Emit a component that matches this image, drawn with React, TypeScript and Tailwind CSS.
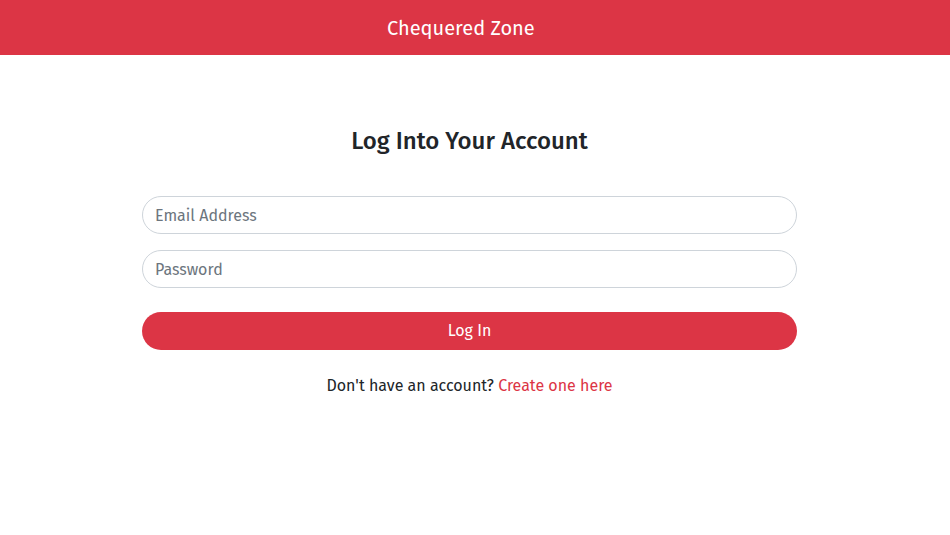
export default function App() {
  const font = { fontFamily: '"Fira Sans", "Open Sans", "Noto Sans", sans-serif' };
  return (
    <div className="min-h-[535px] bg-white text-[#212529]" style={font}>
      <header className="h-[55px] bg-[#dc3545] flex items-center">
        <div className="ml-[387px] text-[20px] text-white leading-none">Chequered Zone</div>
      </header>
      <main className="ml-[142px] w-[655px] flex flex-col">
        <h1 className="mt-[71px] text-center text-[24px] font-medium leading-[30px]">Log Into Your Account</h1>
        <form className="mt-[40px] flex flex-col">
          <input
            type="email"
            placeholder="Email Address"
            className="h-[38px] rounded-full border border-[#ced4da] px-3 text-[16px] placeholder:text-[#6c757d] outline-none"
          />
          <input
            type="password"
            placeholder="Password"
            className="mt-4 h-[38px] rounded-full border border-[#ced4da] px-3 text-[16px] placeholder:text-[#6c757d] outline-none"
          />
          <button
            type="button"
            className="mt-6 h-[38px] rounded-full bg-[#dc3545] text-white text-[16px]"
          >
            Log In
          </button>
        </form>
        <p className="mt-[24px] text-center text-[16px] leading-6">
          Don't have an account? <a className="text-[#dc3545]">Create one here</a>
        </p>
      </main>
    </div>
  );
}
